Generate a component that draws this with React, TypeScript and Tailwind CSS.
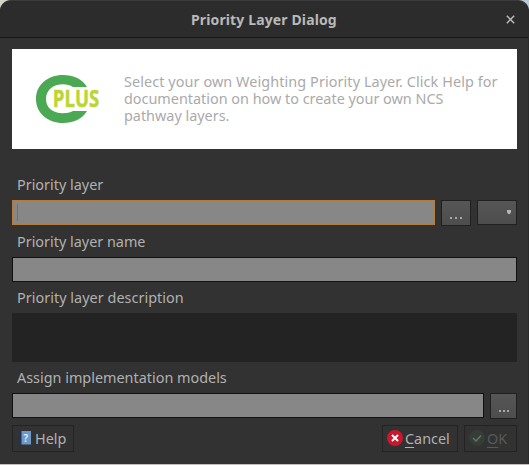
import type { ReactNode } from "react";

const field = "h-[25px] border border-[#111] bg-[#878787]";
const tool = "border border-[#202020] bg-linear-to-b from-[#565656] to-[#4d4d4d]";

function Label({ children, className }: { children: ReactNode; className: string }) {
  return <div className={`flex items-center whitespace-nowrap pl-[5px] leading-[22px] text-[#b1b1b1] ${className}`}>{children}</div>;
}

function Dots({ className }: { className: string }) {
  return (
    <span className={`flex ${className}`}>
      <i className="bg-[#a8a8a8] size-full" />
      <i className="bg-[#a8a8a8] size-full" />
      <i className="bg-[#a8a8a8] size-full" />
    </span>
  );
}

function Logo() {
  return (
    <svg width="66" height="50" viewBox="0 0 66 50" className="shrink-0 overflow-visible">
      <path d="M52 13C47.500 5 38.500 1 28 1C12.500 1 1 11 1 25S12.500 49 28 49C38.500 49 47.500 45 52 37L38 37C35 38.600 32 39.200 28 39.200C18 39.200 11 34 11 25S18 10.200 28 10.200C32 10.200 35 11 38 13Z" fill="#4ba853" />
      <text x="17.800" y="33.300" textLength="46.500" lengthAdjust="spacingAndGlyphs" fontFamily="Open Sans, sans-serif" fontWeight="700" fontSize="23.500" fill="#bdd533" stroke="#bdd533" strokeWidth="0.5">PLUS</text>
    </svg>
  );
}

export default function App() {
  return (
    <div className="h-[465px] w-[529px] overflow-hidden bg-[linear-gradient(90deg,#d4d4cd_0,#d4d4cd_10px,#252c2e_11px,#252c2e_500px,#b9cbd2_518px)] font-['Noto_Sans',sans-serif] text-[14.4px]">
      <div className="flex h-[464px] w-[529px] flex-col rounded-t-[11px] border-t border-r border-t-[#3b3b3b] border-r-[#2a2a2a] bg-[#323232]">
        <header className="flex h-[37px] shrink-0 items-center rounded-t-[10px] border-b border-[#171717] bg-[#2c2c2c]">
          <h1 className="ml-[191px] w-[146px] whitespace-nowrap text-[14px] font-bold tracking-[0.13px] text-[#b9b9b9]">Priority Layer Dialog</h1>
          <svg className="ml-[169px]" width="9" height="9" viewBox="0 0 9 9" stroke="#bdbdbd" strokeWidth="1.4"><path d="M.8.8l7.400 7.400M8.200.8L.8 8.200" /></svg>
        </header>
        <main className="flex flex-col pl-3 pr-[11px] pt-[11px]">
          <section className="flex h-[100px] w-[505px] items-center bg-white pl-[23px]">
            <Logo />
            <p className="mb-[2px] ml-[23px] whitespace-nowrap leading-[17px] text-[#aaa]">
              <span className="block tracking-[0.09px]">Select your own Weighting Priority Layer. Click Help for</span>
              <span className="block">documentation on how to create your own NCS</span>
              <span className="block">pathway layers.</span>
            </p>
          </section>
          <Label className="mt-[25px] h-[22px]">Priority layer</Label>
          <div className="mt-[4px] flex h-[26px] items-start gap-[6px]">
            <div className="flex h-[25px] w-[423px] items-center border border-[#b37c3d] bg-[#878787] pl-[4px]"><i className="h-[17px] w-px bg-[#727272]" /></div>
            <div className={`${tool} flex h-[26px] w-[30px] items-end justify-center pb-[6px]`}><Dots className="h-[2px] w-[12px] gap-[3px]" /></div>
            <div className={`${tool} flex h-[25px] w-[40px] items-center justify-end pb-px pr-[5px]`}><svg width="4" height="4"><path d="M0 0h4v2l-1 2H1L0 2z" fill="#b5b5b5" /></svg></div>
          </div>
          <Label className="mt-[5px] h-[22px]">Priority layer name</Label>
          <div className={`${field} mt-[4px] w-[505px]`} />
          <Label className="mt-[5px] h-[22px] tracking-[0.04px]">Priority layer description</Label>
          <div className="mt-[4px] h-[49px] w-[505px] bg-[#232323]" />
          <Label className="mt-[5px] h-[22px]">Assign implementation models</Label>
          <div className="mt-[4px] flex h-[26px] items-start gap-[6px]">
            <div className={`${field} w-[472px]`} />
            <div className={`${tool} flex h-[26px] w-[27px] items-end justify-center pb-[6px]`}><Dots className="h-[2px] w-[10px] gap-[2px]" /></div>
          </div>
          <footer className="mt-[6px] flex h-[27px] w-[505px] text-[#b1b1b1]">
            <button className="flex w-[62px] items-center border border-[#232323] pl-[5px]">
              <svg width="13" height="14" viewBox="0 0 13 14" className="mb-[2px] mr-[4px]"><path d="M0 0h4v14H0z" fill="#263343" /><path d="M3.500 0H13v13.500H3.500z" fill="#6d99ca" /><text x="5.500" y="10.500" fontFamily="Noto Sans" fontSize="10" fontWeight="600" fill="#e4edf5">?</text></svg>
              <span>Help</span>
            </button>
            <button className="ml-auto flex w-[76px] items-center border border-[#232323] pl-[4px]">
              <svg width="16" height="16" viewBox="0 0 16 16" className="mb-px mr-[2px]"><circle cx="8" cy="8" r="8" fill="#c9172e" /><path d="M5 5l6 6M11 5l-6 6" stroke="#fff" strokeWidth="2" /></svg>
              <span><span className="underline decoration-1 underline-offset-[3px]">C</span>ancel</span>
            </button>
            <button className="ml-[6px] flex w-[53px] items-center border border-[#232323] pl-[4px] text-[#595959]">
              <svg width="16" height="16" viewBox="0 0 16 16" className="mb-px mr-[2px]"><circle cx="8" cy="8" r="8" fill="#343d36" /><path d="M4 8l3 3 5-5.500" fill="none" stroke="#6b716c" strokeWidth="1.500" /></svg>
              <span><span className="underline decoration-1 underline-offset-[3px]">O</span>K</span>
            </button>
          </footer>
        </main>
      </div>
      <div className="h-px bg-[#c4bdb9]" />
    </div>
  );
}
